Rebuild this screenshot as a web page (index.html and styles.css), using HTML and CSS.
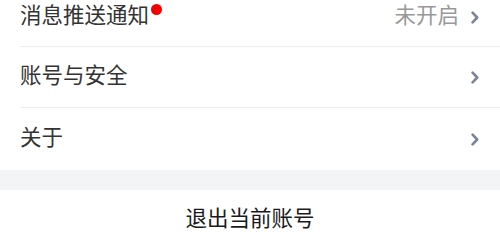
FILE: index.html
```html
<!DOCTYPE html>
<html lang="zh-CN">
<head>
<meta charset="utf-8">
<link rel="stylesheet" href="styles.css">
</head>
<body>
<div class="page">
  <div class="group">
    <div class="row first">
      <span class="label">消息推送通知<span class="dot"></span></span>
      <span class="right"><span class="value">未开启</span><svg class="chev" viewBox="0 0 8 13" width="8" height="13"><path d="M1.6 1.6 L6.2 6.5 L1.6 11.4" fill="none" stroke="#7b8597" stroke-width="2.6" stroke-linecap="round" stroke-linejoin="round"/></svg></span>
    </div>
    <div class="row">
      <span class="label">账号与安全</span>
      <span class="right"><svg class="chev" viewBox="0 0 8 13" width="8" height="13"><path d="M1.6 1.6 L6.2 6.5 L1.6 11.4" fill="none" stroke="#7b8597" stroke-width="2.6" stroke-linecap="round" stroke-linejoin="round"/></svg></span>
    </div>
    <div class="row last">
      <span class="label">关于</span>
      <span class="right"><svg class="chev" viewBox="0 0 8 13" width="8" height="13"><path d="M1.6 1.6 L6.2 6.5 L1.6 11.4" fill="none" stroke="#7b8597" stroke-width="2.6" stroke-linecap="round" stroke-linejoin="round"/></svg></span>
    </div>
  </div>
  <div class="spacer"></div>
  <div class="logout"><span class="logout-text">退出当前账号</span></div>
</div>
</body>
</html>
```
FILE: styles.css
```css
html, body {
  margin: 0;
  padding: 0;
  background: #ffffff;
  overflow: hidden;
}
.page {
  width: 500px;
  font-family: "Noto Sans CJK SC", "Noto Sans", sans-serif;
}
.group {
  padding-left: 20px;
  background: #fff;
}
.row {
  height: 60px;
  display: flex;
  align-items: center;
  justify-content: space-between;
  border-bottom: 1px solid #ececec;
  padding-right: 21px;
}
.row.first {
  height: 43px;
  padding-top: 3px;
  align-items: flex-start;
}
.row.last {
  border-bottom: none;
  height: 62px;
}
.label {
  font-size: 21.5px;
  color: #333;
  position: relative;
  line-height: 1;
  margin-bottom: 7px;
}
.dot {
  position: absolute;
  right: -13px;
  top: 1px;
  width: 11px;
  height: 11px;
  border-radius: 50%;
  background: #f40000;
}
.right {
  display: flex;
  align-items: center;
  gap: 12px;
}
.value {
  font-size: 21.5px;
  color: #999;
  line-height: 1;
  margin-bottom: 7px;
}
.chev {
  display: block;
  margin-top: 1px;
}
.spacer {
  height: 20px;
  background: #f3f4f6;
}
.logout {
  height: 56px;
  display: flex;
  align-items: center;
  justify-content: center;
  background: #fff;
}
.logout-text {
  font-size: 21.5px;
  color: #1a1a1a;
  line-height: 1;
  margin-bottom: 3px;
}
```
